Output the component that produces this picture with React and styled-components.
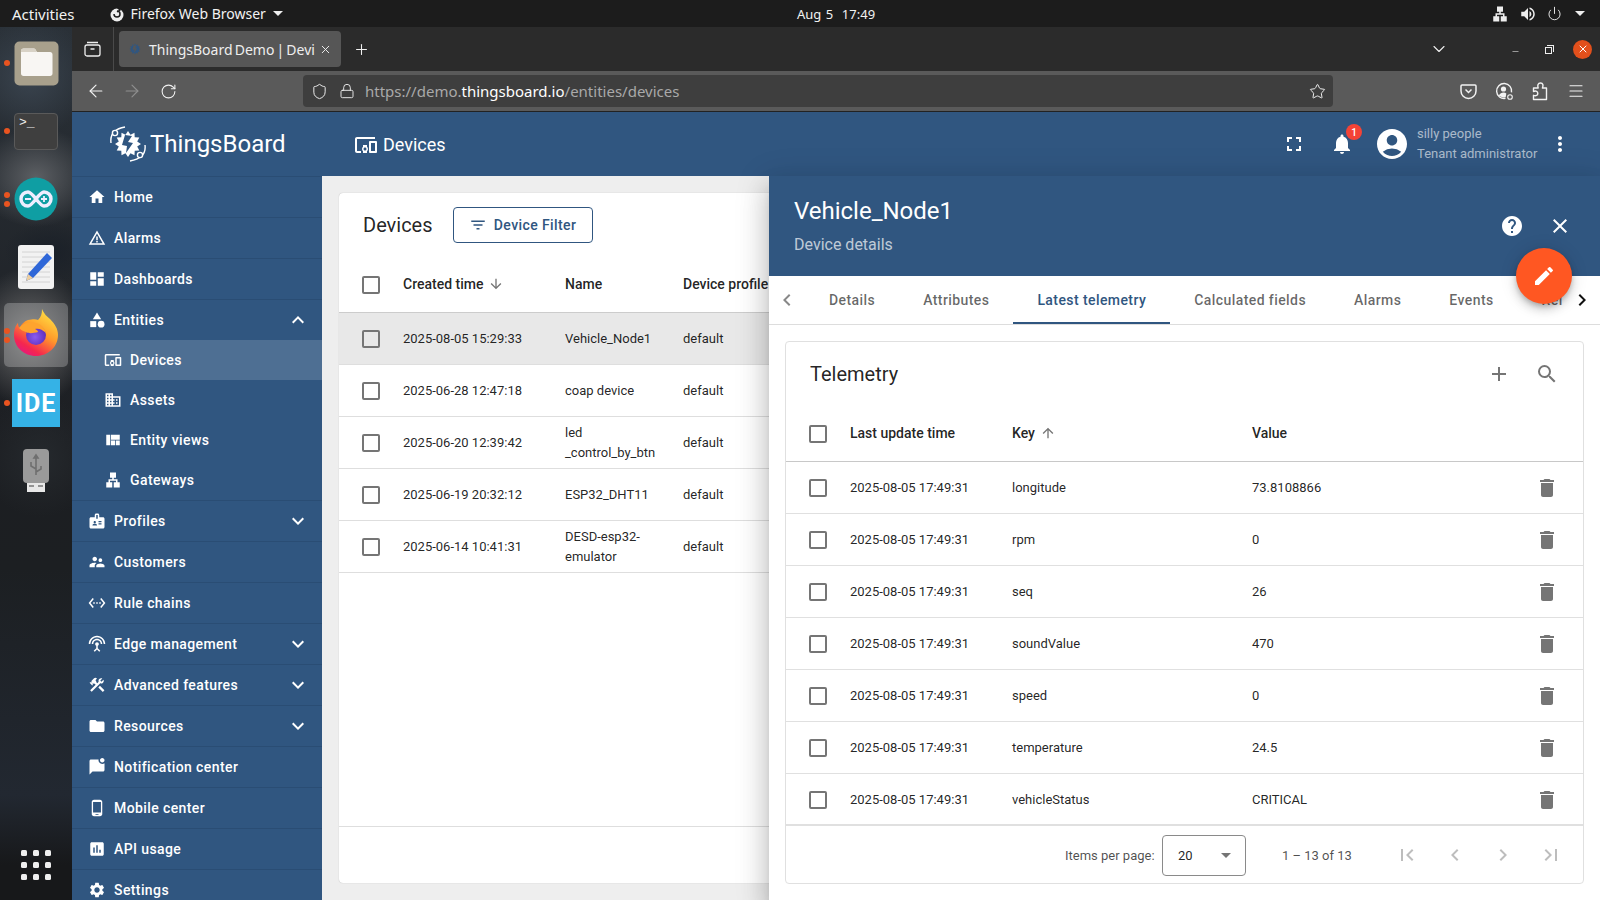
import React from 'react';
import styled, { createGlobalStyle } from 'styled-components';
import {
  MdHome, MdWarningAmber, MdDashboard, MdCategory, MdDevicesOther, MdDomain, MdViewQuilt, MdLan, MdBadge,
  MdSupervisorAccount, MdSettingsEthernet, MdSettingsInputAntenna, MdConstruction, MdFolder, MdMarkChatUnread,
  MdPhoneAndroid, MdInsertChart, MdSettings, MdExpandMore, MdExpandLess, MdFullscreen, MdNotifications,
  MdAccountCircle, MdMoreVert, MdHelp, MdClose, MdEdit, MdAdd, MdSearch, MdDelete, MdFilterList, MdArrowDownward,
  MdArrowUpward, MdChevronLeft, MdChevronRight, MdFirstPage, MdLastPage, MdArrowDropDown, MdVolumeUp
} from 'react-icons/md';
import { ArrowLeft, ArrowRight, RotateCw, Shield, Lock, Star, Menu, Plus, X, ChevronDown, Power, Minus } from 'lucide-react';

const BLUE = '#305680';

const Global = createGlobalStyle`
  html, body { margin: 0; padding: 0; width: 1600px; height: 900px; overflow: hidden; background: #111; }
  * { box-sizing: border-box; }
  #root { width: 1600px; height: 900px; }
`;

const Page = styled.div`
  width: 1600px; height: 900px; display: flex; flex-direction: column; overflow: hidden;
  font-family: Roboto, "Liberation Sans", sans-serif;
`;

/* GNOME top bar */
const TopBar = styled.header`
  height: 27px; flex: none; background: #1c1c1c; color: #f2f2f2; display: grid;
  grid-template-columns: 1fr auto 1fr; align-items: center; padding: 0 12px;
  font-family: "Noto Sans", sans-serif; font-size: 14px;
`;
const TopLeft = styled.div` display: flex; align-items: center; `;
const ActivitiesLabel = styled.span` font-size: 15px; `;
const AppMenu = styled.div` display: flex; align-items: center; margin-left: 34px; gap: 6px; `;
const Caret = styled.span`
  width: 0; height: 0; border-left: 5px solid transparent; border-right: 5px solid transparent;
  border-top: 5px solid #eee; margin-left: ${p => p.$ml || 1}px;
`;
const Clock = styled.div` word-spacing: 1px; margin-left: 72px; font-size: 13px; `;
const Tray = styled.div` display: flex; justify-content: flex-end; align-items: center; gap: 10px; padding-right: 3px; color: #eee; `;

/* Desktop */
const Desktop = styled.div` flex: 1; display: flex; min-height: 0; `;
const Dock = styled.nav`
  width: 72px; flex: none; display: flex; flex-direction: column; align-items: center; padding-top: 2px;
  background:
    radial-gradient(ellipse 60px 60px at 30px 50px, #3a444f 0%, transparent 100%),
    radial-gradient(ellipse 60px 50px at 36px 150px, #5c5f63 0%, transparent 100%),
    radial-gradient(ellipse 46px 30px at 50px 225px, #1a2028 0%, transparent 100%),
    radial-gradient(ellipse 60px 70px at 30px 310px, #6c6c6c 0%, transparent 100%),
    radial-gradient(ellipse 60px 60px at 40px 430px, #25292d 0%, transparent 100%),
    linear-gradient(180deg, #2a3138 0%, #1c1e22 48%, #1c1f22 62%, #222831 88%, #17181a 96%);
`;
const DockSlot = styled.div`
  position: relative; width: 72px; height: 68px; flex: none; display: flex; align-items: center; justify-content: center;
`;
const DockActive = styled.div`
  width: 64px; height: 64px; border-radius: 5px; background: rgba(255,255,255,.24);
  display: flex; align-items: center; justify-content: center;
`;
const RunDots = styled.div`
  position: absolute; left: 4px; top: 0; bottom: 0; display: flex; flex-direction: column; gap: 3px; justify-content: center;
`;
const RunDot = styled.span` width: 6px; height: 6px; border-radius: 50%; background: #e95420; `;
const TerminalTile = styled.div`
  width: 44px; height: 37px; background: #3f3f3f; border: 1px solid #5a5a5a; border-radius: 4px; color: #eee;
  font: 13px/13px "Liberation Mono", monospace; padding: 2px 4px;
`;
const IdeTile = styled.div`
  width: 48px; height: 48px; background: #35b2e6; color: #fff; display: flex; align-items: center; justify-content: center;
  font: 700 25px Roboto, sans-serif; letter-spacing: 1px;
`;
const AppGrid = styled.div`
  margin-top: auto; margin-bottom: 20px; display: grid; grid-template-columns: repeat(3, 6px); gap: 6px;
`;
const GridDot = styled.span` width: 6px; height: 6px; border-radius: 1.5px; background: #eee; `;

/* Browser */
const Browser = styled.div` flex: 1; display: flex; flex-direction: column; min-width: 0; `;
const TabStrip = styled.div`
  height: 44px; flex: none; background: #2b2b2b; display: flex; align-items: center; color: #f0f0f0;
  font-family: "Noto Sans", sans-serif;
`;
const StripIcon = styled.div` width: 42px; height: 44px; display: flex; align-items: center; justify-content: center; border-right: 1px solid #4a4a4a; margin-right: 4px; `;
const Tab = styled.div`
  width: 222px; height: 36px; background: #565656; border-radius: 4px; display: flex; align-items: center; padding: 0 9px 0 8px;
  margin-left: 1px; gap: 6px; font-size: 14px; word-spacing: -1.5px; color: #eee;
`;
const TabTitle = styled.span` flex: 1; min-width: 0; white-space: nowrap; `;
const NewTab = styled.div` width: 40px; display: flex; justify-content: center; `;
const StripEnd = styled.div` margin-left: auto; display: flex; align-items: center; padding-right: 8px; `;
const WindowButton = styled.div` width: 33px; display: flex; align-items: center; justify-content: center; `;
const TabListBtn = styled(WindowButton)` margin-right: 44px; `;
const MinimizeGlyph = styled(Minus)` margin-top: 5px; `;
const CloseDot = styled.div`
  width: 19px; height: 19px; background: #e2501c; border-radius: 50%; display: flex; align-items: center; justify-content: center; margin-left: 8px;
`;
const RestoreGlyph = styled.span`
  width: 7px; height: 7px; border: 1px solid #eee; position: relative; display: block; margin-top: 2px;
  &::after { content: ''; position: absolute; left: 1px; top: -3px; width: 6px; height: 6px; border-top: 1px solid #eee; border-right: 1px solid #eee; }
`;
const Toolbar = styled.div`
  height: 41px; flex: none; background: #5a5a5a; border-bottom: 1px solid #222; display: flex; align-items: center; color: #f2f2f2;
  padding: 0 6px 0 6px;
`;
const NavButton = styled.div`
  width: 36px; display: flex; justify-content: center; color: ${p => p.$dim ? '#8f8f8f' : '#f2f2f2'};
`;
const UrlBar = styled.div`
  width: 1030px; height: 32px; margin-left: 117px; margin-right: 117px; background: #3e3e3e; border-radius: 4px; display: flex; align-items: center;
  padding: 0 2px 0 2px; font: 15px "Noto Sans", sans-serif; color: #a9a9a9; flex: none;
`;
const UrlIcon = styled.span` width: 28px; display: flex; justify-content: center; color: #eee; `;
const UrlText = styled.span` flex: 1; margin-left: 4px; white-space: nowrap; b { font-weight: 400; color: #fff; } `;

/* App */
const AppBody = styled.div` flex: 1; display: flex; min-height: 0; overflow: hidden; `;
const Sidebar = styled.aside` width: 250px; flex: none; background: ${BLUE}; color: #fff; display: flex; flex-direction: column; `;
const LogoRow = styled.div`
  height: 65px; flex: none; display: flex; align-items: center; padding: 0 0 1px 37px; gap: 3px;
  font-size: 24px; font-weight: 400; color: #fff; border-bottom: 1px solid #2a4d74;
`;
const NavRow = styled.div`
  height: ${p => p.$sub || p.$open ? 40 : 41}px; flex: none; display: flex; align-items: center; gap: 8px; padding: 0 12px 0 ${p => p.$sub ? 32 : 16}px;
  font-size: 14px; font-weight: 500; letter-spacing: .4px; color: #fff;
  background: ${p => p.$active ? 'rgba(255,255,255,.15)' : 'transparent'};
  border-bottom: ${p => p.$sub || p.$open ? 'none' : '1px solid #2a4d74'};
  svg { flex: none; }
`;
const NavLabel = styled.span` flex: 1; `;
const SubGroup = styled.div` border-bottom: 1px solid #2a4d74; display: flex; flex-direction: column; `;

const Main = styled.div` flex: 1; display: flex; flex-direction: column; min-width: 0; position: relative; `;
const AppHeader = styled.div`
  height: 64px; flex: none; background: ${BLUE}; color: #fff; display: flex; align-items: center; padding-left: 32px;
`;
const PageTitle = styled.div` display: flex; align-items: center; gap: 5px; font-size: 18px; font-weight: 400; flex: 1; padding-top: 1px; `;
const HeaderTools = styled.div` display: flex; align-items: center; `;
const IconSlot = styled.div` position: relative; width: 48px; display: flex; justify-content: center; align-items: center; `;
const Badge = styled.span`
  position: absolute; top: -8px; right: 4px; width: 16px; height: 16px; border-radius: 50%; background: #f44336; color: #fff;
  font-size: 10px; font-weight: 500; display: flex; align-items: center; justify-content: center;
`;
const UserBlock = styled.div` display: flex; align-items: center; gap: 7px; margin-left: 8px; `;
const UserText = styled.div` display: flex; flex-direction: column; gap: 3px; width: 121px; font-size: 13px; line-height: 17px; color: rgba(255,255,255,.6); margin-top: -2px; `;
const MoreSlot = styled.div` width: 40px; display: flex; justify-content: center; margin-right: 20px; margin-left: 2px; `;

const Content = styled.div` flex: 1; background: #eee; padding: 17px 16px 17px 17px; min-height: 0; `;
const Card = styled.section`
  height: 100%; background: #fff; border-radius: 4px; box-shadow: 0 0 1px rgba(0,0,0,.3); display: flex; flex-direction: column; overflow: hidden;
`;
const CardTop = styled.div` height: 64px; flex: none; display: flex; align-items: center; padding: 0 24px; gap: 20px; font-size: 20px; color: rgba(0,0,0,.87); `;
const FilterButton = styled.button`
  width: 140px; height: 36px; border: 1px solid ${BLUE}; border-radius: 4px; background: #fff; color: ${BLUE}; display: flex; align-items: center;
  justify-content: center; gap: 7px; font: 500 14px Roboto, sans-serif; letter-spacing: .4px; padding: 0;
`;
const DeviceRow = styled.div`
  display: grid; grid-template-columns: 64px 162px 118px 1fr; align-items: center; flex: none;
  height: ${p => p.$head ? 56 : 52}px; font-size: 13px; line-height: 20px; color: rgba(0,0,0,.87);
  background: ${p => p.$selected ? '#e8e8e8' : 'transparent'}; border-bottom: 1px solid #dedede;
  ${p => p.$head && 'font-size: 14px; font-weight: 500; border-bottom-color: #ccc;'}
`;
const Check = styled.span` width: 18px; height: 18px; border: 2px solid #757575; border-radius: 2px; display: block; background: transparent; `;
const CheckCell = styled.div` padding-left: 23px; `;
const NameCell = styled.div` padding-right: 20px; `;
const HeadLabel = styled.span` display: inline-flex; align-items: center; gap: 5px; white-space: nowrap; margin-bottom: 2px; `;
const Spacer = styled.div` flex: 1; border-bottom: 1px solid #dedede; flex-basis: 0; `;
const CardFoot = styled.div` height: 56px; flex: none; `;

/* Drawer */
const Drawer = styled.aside`
  position: absolute; top: 64px; right: 0; bottom: 0; width: 831px; background: #fff; display: flex; flex-direction: column;
  box-shadow: 0 8px 10px -5px rgba(0,0,0,.2), 0 16px 24px 2px rgba(0,0,0,.14), 0 6px 30px 5px rgba(0,0,0,.12);
`;
const DrawerHead = styled.div`
  position: relative; height: 100px; flex: none; background: ${BLUE}; color: #fff; padding: 20px 24px 0 25px;
`;
const DrawerTitle = styled.div` font-size: 24px; line-height: 30px; `;
const DrawerSub = styled.div` font-size: 16px; line-height: 20px; margin-top: 9px; color: rgba(255,255,255,.7); `;
const DrawerTools = styled.div` position: absolute; right: 28px; top: 38px; display: flex; gap: 24px; align-items: center; `;
const Fab = styled.button`
  position: absolute; right: 28px; top: 72px; width: 56px; height: 56px; border-radius: 50%; border: none; background: #ff5722; color: #fff; z-index: 2;
  display: flex; align-items: center; justify-content: center; padding: 0;
  box-shadow: 0 3px 5px -1px rgba(0,0,0,.2), 0 6px 10px 0 rgba(0,0,0,.14), 0 1px 18px 0 rgba(0,0,0,.12);
`;
const TabBar = styled.div` height: 49px; flex: none; display: flex; align-items: center; border-bottom: 1px solid #ddd; `;
const TabChevron = styled.div` width: ${p => p.$w}px; flex: none; display: flex; justify-content: center; color: ${p => p.$dim ? '#888' : '#111'}; `;
const TabList = styled.div` flex: 1; height: 48px; display: flex; overflow: hidden; min-width: 0; `;
const DrawerTab = styled.div`
  height: 48px; flex: none; padding: 2px 24px 0; display: flex; align-items: center; font-size: 14px; font-weight: 500; letter-spacing: .42px;
  color: ${p => p.$active ? BLUE : 'rgba(0,0,0,.6)'}; border-bottom: 2px solid ${p => p.$active ? BLUE : 'transparent'};
`;
const DrawerBody = styled.div` flex: 1; padding: 16px; min-height: 0; `;
const TeleCard = styled.section`
  height: 100%; border: 1px solid #e0e0e0; border-radius: 4px; display: flex; flex-direction: column; background: #fff; overflow: hidden;
`;
const TeleTop = styled.div`
  height: 64px; flex: none; display: flex; align-items: center; padding: 0 12px 0 24px; font-size: 20px; color: rgba(0,0,0,.87);
`;
const TeleTitle = styled.div` flex: 1; `;
const ToolButton = styled.div` width: 48px; display: flex; justify-content: center; color: #757575; `;
const TeleRow = styled.div`
  display: grid; grid-template-columns: 64px 162px 240px 1fr 64px; align-items: center; flex: none;
  height: ${p => p.$head ? 56 : 52}px; font-size: 13px; color: rgba(0,0,0,.87); border-bottom: ${p => p.$last ? '2px solid #e0e0e0' : p.$head ? '1px solid #c8c8c8' : '1px solid #e0e0e0'};
  ${p => p.$last && 'padding-top: 1px;'}
  ${p => p.$head && 'font-size: 14px; font-weight: 500;'}
`;
const TrashCell = styled.div` display: flex; justify-content: flex-start; padding-left: 16px; color: #757575; `;
const Pager = styled.div`
  flex: 1; display: flex; align-items: center; padding: 1px 0 0 279px; font-size: 13px; color: rgba(0,0,0,.7);
`;
const PagerLabel = styled.span` width: 97px; flex: none; white-space: nowrap; `;
const PageSelect = styled.div`
  width: 84px; height: 41px; border: 1px solid #8a8a8a; border-radius: 4px; display: flex; align-items: center; justify-content: space-between;
  padding: 0 7px 0 15px; font-size: 13px; color: rgba(0,0,0,.87); flex: none;
`;
const PagerRange = styled.span` margin-left: 36px; width: 125px; flex: none; `;
const PagerNav = styled.div` display: flex; color: rgba(0,0,0,.26); margin-left: -24px; `;
const PagerBtn = styled.div` width: 48px; display: flex; justify-content: center; `;
const FirefoxSvg = styled.svg` margin-top: -4px; `;

/* Drawings */
const gearPoints = (() => {
  const pts = [];
  const n = 12;
  for (let i = 0; i < n * 2; i++) {
    const r = i % 2 ? 9.5 : 13;
    const a = (i / (n * 2)) * Math.PI * 2;
    pts.push(`${(19 + r * Math.cos(a)).toFixed(1)},${(19 + r * Math.sin(a)).toFixed(1)}`);
  }
  return pts.join(' ');
})();

const TbLogo = ({ size = 38, color = '#fff', bg = BLUE, arcs = true }) => (
  <svg width={size} height={size} viewBox="0 0 38 38" fill="none">
    <polygon points={gearPoints} fill={color} />
    <path d="M16 10l7 1-4 6 5 1-7 10 1-7-5-1z" fill={bg} />
    {arcs && <>
      <path d="M2 18C1 10 4 4 16 2" stroke={color} strokeWidth="1.4" />
      <circle cx="6" cy="8" r="2.6" stroke={color} strokeWidth="1.4" fill={bg} />
      <path d="M36 20c1 8-3 14-15 16" stroke={color} strokeWidth="1.4" />
      <circle cx="31" cy="30" r="2.6" stroke={color} strokeWidth="1.4" fill={bg} />
    </>}
  </svg>
);

const FilesIcon = () => (
  <svg width="45" height="45" viewBox="0 0 45 45">
    <rect x=".5" y=".5" width="44" height="44" rx="5" fill="#a8a08c" />
    <path d="M7 10c0-1.500 1-2.500 2.500-2.500h10c1 0 2 .6 2.500 2l1 1.500H36c1.500 0 2.500 1 2.500 2.500v19c0 1.500-1 2.500-2.500 2.500H9.500C8 35 7 34 7 32.500z" fill="#f8f6f3" />
    <path d="M7 10c0-1.500 1-2.500 2.500-2.500h10c1 0 2 .6 2.500 2l1 1.500H7z" fill="#d8d2c6" />
  </svg>
);
const ArduinoIcon = () => (
  <svg width="44" height="44" viewBox="0 0 44 44">
    <circle cx="22" cy="22" r="21.500" fill="#0f9ea3" />
    <path d="M14 15c-4 0-7 3-7 7s3 7 7 7c5 0 11-14 16-14 4 0 7 3 7 7s-3 7-7 7c-5 0-11-14-16-14z" fill="none" stroke="#eef" strokeWidth="3.400" />
    <path d="M11 22h6M27 22h6M30 19v6" stroke="#eef" strokeWidth="1.800" />
  </svg>
);
const GeditIcon = () => (
  <svg width="38" height="46" viewBox="0 0 38 46">
    <rect x="1" y="1" width="36" height="44" rx="3" fill="#f2f2f2" />
    <path d="M5 8h28M5 13h28M5 18h28M5 23h28M5 28h28M5 33h28M5 38h28" stroke="#ccc" strokeWidth=".8" />
    <path d="M30 9l5 5-19 20-7 3 2-7z" fill="#2f67d8" />
    <path d="M11 30l5 4-7 3z" fill="#eecfa0" />
  </svg>
);
const FirefoxIcon = () => (
  <FirefoxSvg width="46" height="48" viewBox="0 0 46 48">
    <defs>
      <linearGradient id="ffa" x1="0.8" y1="0" x2="0.2" y2="1">
        <stop offset="0" stopColor="#ffe847" /><stop offset=".45" stopColor="#ff9a2a" /><stop offset=".8" stopColor="#f5274e" /><stop offset="1" stopColor="#e31587" />
      </linearGradient>
      <radialGradient id="ffb" cx=".45" cy=".6" r=".6">
        <stop offset="0" stopColor="#8a5cf0" /><stop offset="1" stopColor="#5a2bb8" />
      </radialGradient>
    </defs>
    <path d="M29 0c2 4 3 6 8 10 5 5 8 10 8 16 0 12-10 21-22 21S1 38 1 26c0-6 2-10 4-12 0 3 1 4 2 5 1-4 5-7 8-8 5-1 8-1 10 0 3-3 4-6 4-11z" fill="url(#ffa)" />
    <circle cx="23" cy="26" r="10" fill="url(#ffb)" />
    <path d="M6 19c4-5 10-7 17-5 5 1 9 5 10 10-4-4-8-5-11-4 2 1 3 2 3 3-4 1-9 2-12 0-3-1-5-2-7-4z" fill="#ffa42e" />
  </FirefoxSvg>
);
const UsbIcon = () => (
  <svg width="28" height="44" viewBox="0 0 28 44">
    <rect x="1" y="0" width="26" height="34" rx="4" fill="#9a9a9a" />
    <rect x="5" y="34" width="18" height="9" fill="#e8e8e8" />
    <path d="M7 37h5M16 37h5" stroke="#777" strokeWidth="1.500" />
    <path d="M14 6v20M14 6l-2 3h4zM14 20l-5-3v-4M14 23l5-3v-3" stroke="#6f6f6f" strokeWidth="1.600" fill="none" />
  </svg>
);
const PocketIcon = () => (
  <svg width="17" height="17" viewBox="0 0 17 17" fill="none" stroke="#f2f2f2" strokeWidth="1.500">
    <path d="M2 2h13a1 1 0 0 1 1 1v5a7.500 7.500 0 0 1-15 0V3a1 1 0 0 1 1-1z" /><path d="M5.500 6.500l3 3 3-3" />
  </svg>
);
const AccountIcon = () => (
  <svg width="19" height="19" viewBox="0 0 19 19" fill="none" stroke="#f2f2f2" strokeWidth="1.400">
    <path d="M10.500 16.400a7.500 7.500 0 1 1 6-6" />
    <circle cx="8.500" cy="7" r="2.600" fill="#f2f2f2" stroke="none" />
    <path d="M3.800 13.500c1-2 3-3 4.700-3 1.200 0 2 .3 2.800.9l-.6 3.800c-2.700.6-5.300-.3-6.900-1.700z" fill="#f2f2f2" stroke="none" />
    <circle cx="15" cy="15" r="2.300" strokeWidth="1.100" />
  </svg>
);
const PuzzleIcon = () => (
  <svg width="16" height="19" viewBox="0 0 16 19" fill="none" stroke="#f2f2f2" strokeWidth="1.400" strokeLinejoin="round">
    <path d="M3 6h3.200C5.200 3.500 6 1 8.500 1 11 1 11.600 3.500 10.400 6H14.500v11.500H1.500v-4.200c2.400.9 4.300.2 4.300-1.900S3.900 8.500 1.500 9.500V6z" />
  </svg>
);

const devices = [
  ['2025-08-05 15:29:33', 'Vehicle_Node1', true],
  ['2025-06-28 12:47:18', 'coap device'],
  ['2025-06-20 12:39:42', 'led _control_by_btn'],
  ['2025-06-19 20:32:12', 'ESP32_DHT11'],
  ['2025-06-14 10:41:31', 'DESD-esp32-emulator'],
];
const telemetry = [
  ['longitude', '73.8108866'], ['rpm', '0'], ['seq', '26'], ['soundValue', '470'],
  ['speed', '0'], ['temperature', '24.5'], ['vehicleStatus', 'CRITICAL'],
];
const tabs = ['Details', 'Attributes', 'Latest telemetry', 'Calculated fields', 'Alarms', 'Events', 'Rel'];

const Nav = ({ icon: I, label, sub, active, open, exp }) => (
  <NavRow $sub={sub} $active={active} $open={open}>
    <I size={18} color="#fff" />
    <NavLabel>{label}</NavLabel>
    {exp === 'more' && <MdExpandMore size={24} />}
    {exp === 'less' && <MdExpandLess size={24} />}
  </NavRow>
);

const DockItem = ({ dots = 0, children }) => (
  <DockSlot>
    {dots > 0 && <RunDots>{Array.from({ length: dots }, (_, i) => <RunDot key={i} />)}</RunDots>}
    {children}
  </DockSlot>
);

export default function App() {
  return (
    <Page>
      <Global />
      <TopBar>
        <TopLeft>
          <ActivitiesLabel>Activities</ActivitiesLabel>
          <AppMenu>
            <svg width="16" height="16" viewBox="0 0 16 16"><circle cx="8" cy="9" r="6.500" fill="#eee" /><path d="M5 8a3 3 0 1 0 3-3M8 1l3 3-3 2" fill="none" stroke="#1c1c1c" strokeWidth="1.500" /></svg>
            Firefox Web Browser <Caret />
          </AppMenu>
        </TopLeft>
        <Clock>Aug 5&nbsp; 17:49</Clock>
        <Tray>
          <MdLan size={18} /><MdVolumeUp size={18} /><Power size={15} strokeWidth={1.500} /><Caret $ml={3} />
        </Tray>
      </TopBar>
      <Desktop>
        <Dock>
          <DockItem dots={1}><FilesIcon /></DockItem>
          <DockItem dots={1}><TerminalTile>&gt;_</TerminalTile></DockItem>
          <DockItem dots={2}><ArduinoIcon /></DockItem>
          <DockItem><GeditIcon /></DockItem>
          <DockItem dots={2}><DockActive><FirefoxIcon /></DockActive></DockItem>
          <DockItem dots={1}><IdeTile>IDE</IdeTile></DockItem>
          <DockItem><UsbIcon /></DockItem>
          <AppGrid>{Array.from({ length: 9 }, (_, i) => <GridDot key={i} />)}</AppGrid>
        </Dock>
        <Browser>
          <TabStrip>
            <StripIcon>
              <svg width="17" height="16" viewBox="0 0 17 16" fill="none" stroke="#eee" strokeWidth="1.300"><rect x="1" y="4" width="15" height="11" rx="2" /><path d="M3 1.500h11M6.500 8h4" /></svg>
            </StripIcon>
            <Tab>
              <TbLogo size={16} color={BLUE} bg="#565656" arcs={false} />
              <TabTitle>ThingsBoard Demo | Devi</TabTitle>
              <X size={13} strokeWidth={1.800} />
            </Tab>
            <NewTab><Plus size={17} strokeWidth={1.500} /></NewTab>
            <StripEnd>
              <TabListBtn><ChevronDown size={20} strokeWidth={1.300} /></TabListBtn>
              <WindowButton><MinimizeGlyph size={9} strokeWidth={1.500} /></WindowButton>
              <WindowButton><RestoreGlyph /></WindowButton>
              <CloseDot><X size={12} strokeWidth={2} color="#fff" /></CloseDot>
            </StripEnd>
          </TabStrip>
          <Toolbar>
            <NavButton><ArrowLeft size={20} strokeWidth={1.400} /></NavButton>
            <NavButton $dim><ArrowRight size={20} strokeWidth={1.400} /></NavButton>
            <NavButton><RotateCw size={17} strokeWidth={1.500} /></NavButton>
            <UrlBar>
              <UrlIcon><Shield size={17} strokeWidth={1.400} /></UrlIcon>
              <UrlIcon><Lock size={16} strokeWidth={1.400} /></UrlIcon>
              <UrlText>https://demo.<b>thingsboard.io</b>/entities/devices</UrlText>
              <UrlIcon><Star size={17} strokeWidth={1.400} /></UrlIcon>
            </UrlBar>
            <NavButton><PocketIcon /></NavButton>
            <NavButton><AccountIcon /></NavButton>
            <NavButton><PuzzleIcon /></NavButton>
            <NavButton><Menu size={18} strokeWidth={1.500} /></NavButton>
          </Toolbar>
          <AppBody>
            <Sidebar>
              <LogoRow><TbLogo />ThingsBoard</LogoRow>
              <Nav icon={MdHome} label="Home" />
              <Nav icon={MdWarningAmber} label="Alarms" />
              <Nav icon={MdDashboard} label="Dashboards" />
              <Nav icon={MdCategory} label="Entities" open exp="less" />
              <SubGroup>
                <Nav icon={MdDevicesOther} label="Devices" sub active />
                <Nav icon={MdDomain} label="Assets" sub />
                <Nav icon={MdViewQuilt} label="Entity views" sub />
                <Nav icon={MdLan} label="Gateways" sub />
              </SubGroup>
              <Nav icon={MdBadge} label="Profiles" exp="more" />
              <Nav icon={MdSupervisorAccount} label="Customers" />
              <Nav icon={MdSettingsEthernet} label="Rule chains" />
              <Nav icon={MdSettingsInputAntenna} label="Edge management" exp="more" />
              <Nav icon={MdConstruction} label="Advanced features" exp="more" />
              <Nav icon={MdFolder} label="Resources" exp="more" />
              <Nav icon={MdMarkChatUnread} label="Notification center" />
              <Nav icon={MdPhoneAndroid} label="Mobile center" />
              <Nav icon={MdInsertChart} label="API usage" />
              <Nav icon={MdSettings} label="Settings" />
            </Sidebar>
            <Main>
              <AppHeader>
                <PageTitle><MdDevicesOther size={24} />Devices</PageTitle>
                <HeaderTools>
                  <IconSlot><MdFullscreen size={24} /></IconSlot>
                  <IconSlot><MdNotifications size={24} /><Badge>1</Badge></IconSlot>
                  <UserBlock>
                    <MdAccountCircle size={36} />
                    <UserText><span>silly people</span><span>Tenant administrator</span></UserText>
                  </UserBlock>
                  <MoreSlot><MdMoreVert size={24} /></MoreSlot>
                </HeaderTools>
              </AppHeader>
              <Content>
                <Card>
                  <CardTop>
                    Devices
                    <FilterButton><MdFilterList size={18} />Device Filter</FilterButton>
                  </CardTop>
                  <DeviceRow $head>
                    <CheckCell><Check /></CheckCell>
                    <HeadLabel>Created time <MdArrowDownward size={16} color="#757575" /></HeadLabel>
                    <HeadLabel>Name</HeadLabel>
                    <HeadLabel>Device profile</HeadLabel>
                  </DeviceRow>
                  {devices.map(([t, n, sel]) => (
                    <DeviceRow key={t} $selected={sel}>
                      <CheckCell><Check /></CheckCell>
                      <span>{t}</span>
                      <NameCell>{n}</NameCell>
                      <span>default</span>
                    </DeviceRow>
                  ))}
                  <Spacer />
                  <CardFoot />
                </Card>
              </Content>
              <Drawer>
                <DrawerHead>
                  <DrawerTitle>Vehicle_Node1</DrawerTitle>
                  <DrawerSub>Device details</DrawerSub>
                  <DrawerTools>
                    <MdHelp size={24} />
                    <MdClose size={24} />
                  </DrawerTools>
                  <Fab><MdEdit size={24} /></Fab>
                </DrawerHead>
                <TabBar>
                  <TabChevron $w={36} $dim><MdChevronLeft size={24} /></TabChevron>
                  <TabList>
                    {tabs.map(t => <DrawerTab key={t} $active={t === 'Latest telemetry'}>{t}</DrawerTab>)}
                  </TabList>
                  <TabChevron $w={36}><MdChevronRight size={24} /></TabChevron>
                </TabBar>
                <DrawerBody>
                  <TeleCard>
                    <TeleTop>
                      <TeleTitle>Telemetry</TeleTitle>
                      <ToolButton><MdAdd size={24} /></ToolButton>
                      <ToolButton><MdSearch size={24} /></ToolButton>
                    </TeleTop>
                    <TeleRow $head>
                      <CheckCell><Check /></CheckCell>
                      <HeadLabel>Last update time</HeadLabel>
                      <HeadLabel>Key <MdArrowUpward size={16} color="#757575" /></HeadLabel>
                      <HeadLabel>Value</HeadLabel>
                      <span />
                    </TeleRow>
                    {telemetry.map(([k, v], i) => (
                      <TeleRow key={k} $last={i === telemetry.length - 1}>
                        <CheckCell><Check /></CheckCell>
                        <span>2025-08-05 17:49:31</span>
                        <span>{k}</span>
                        <span>{v}</span>
                        <TrashCell><MdDelete size={24} /></TrashCell>
                      </TeleRow>
                    ))}
                    <Pager>
                      <PagerLabel>Items per page:</PagerLabel>
                      <PageSelect>20 <MdArrowDropDown size={24} color="#757575" /></PageSelect>
                      <PagerRange>1 – 13 of 13</PagerRange>
                      <PagerNav>
                        <PagerBtn><MdFirstPage size={24} /></PagerBtn>
                        <PagerBtn><MdChevronLeft size={24} /></PagerBtn>
                        <PagerBtn><MdChevronRight size={24} /></PagerBtn>
                        <PagerBtn><MdLastPage size={24} /></PagerBtn>
                      </PagerNav>
                    </Pager>
                  </TeleCard>
                </DrawerBody>
              </Drawer>
            </Main>
          </AppBody>
        </Browser>
      </Desktop>
    </Page>
  );
}
